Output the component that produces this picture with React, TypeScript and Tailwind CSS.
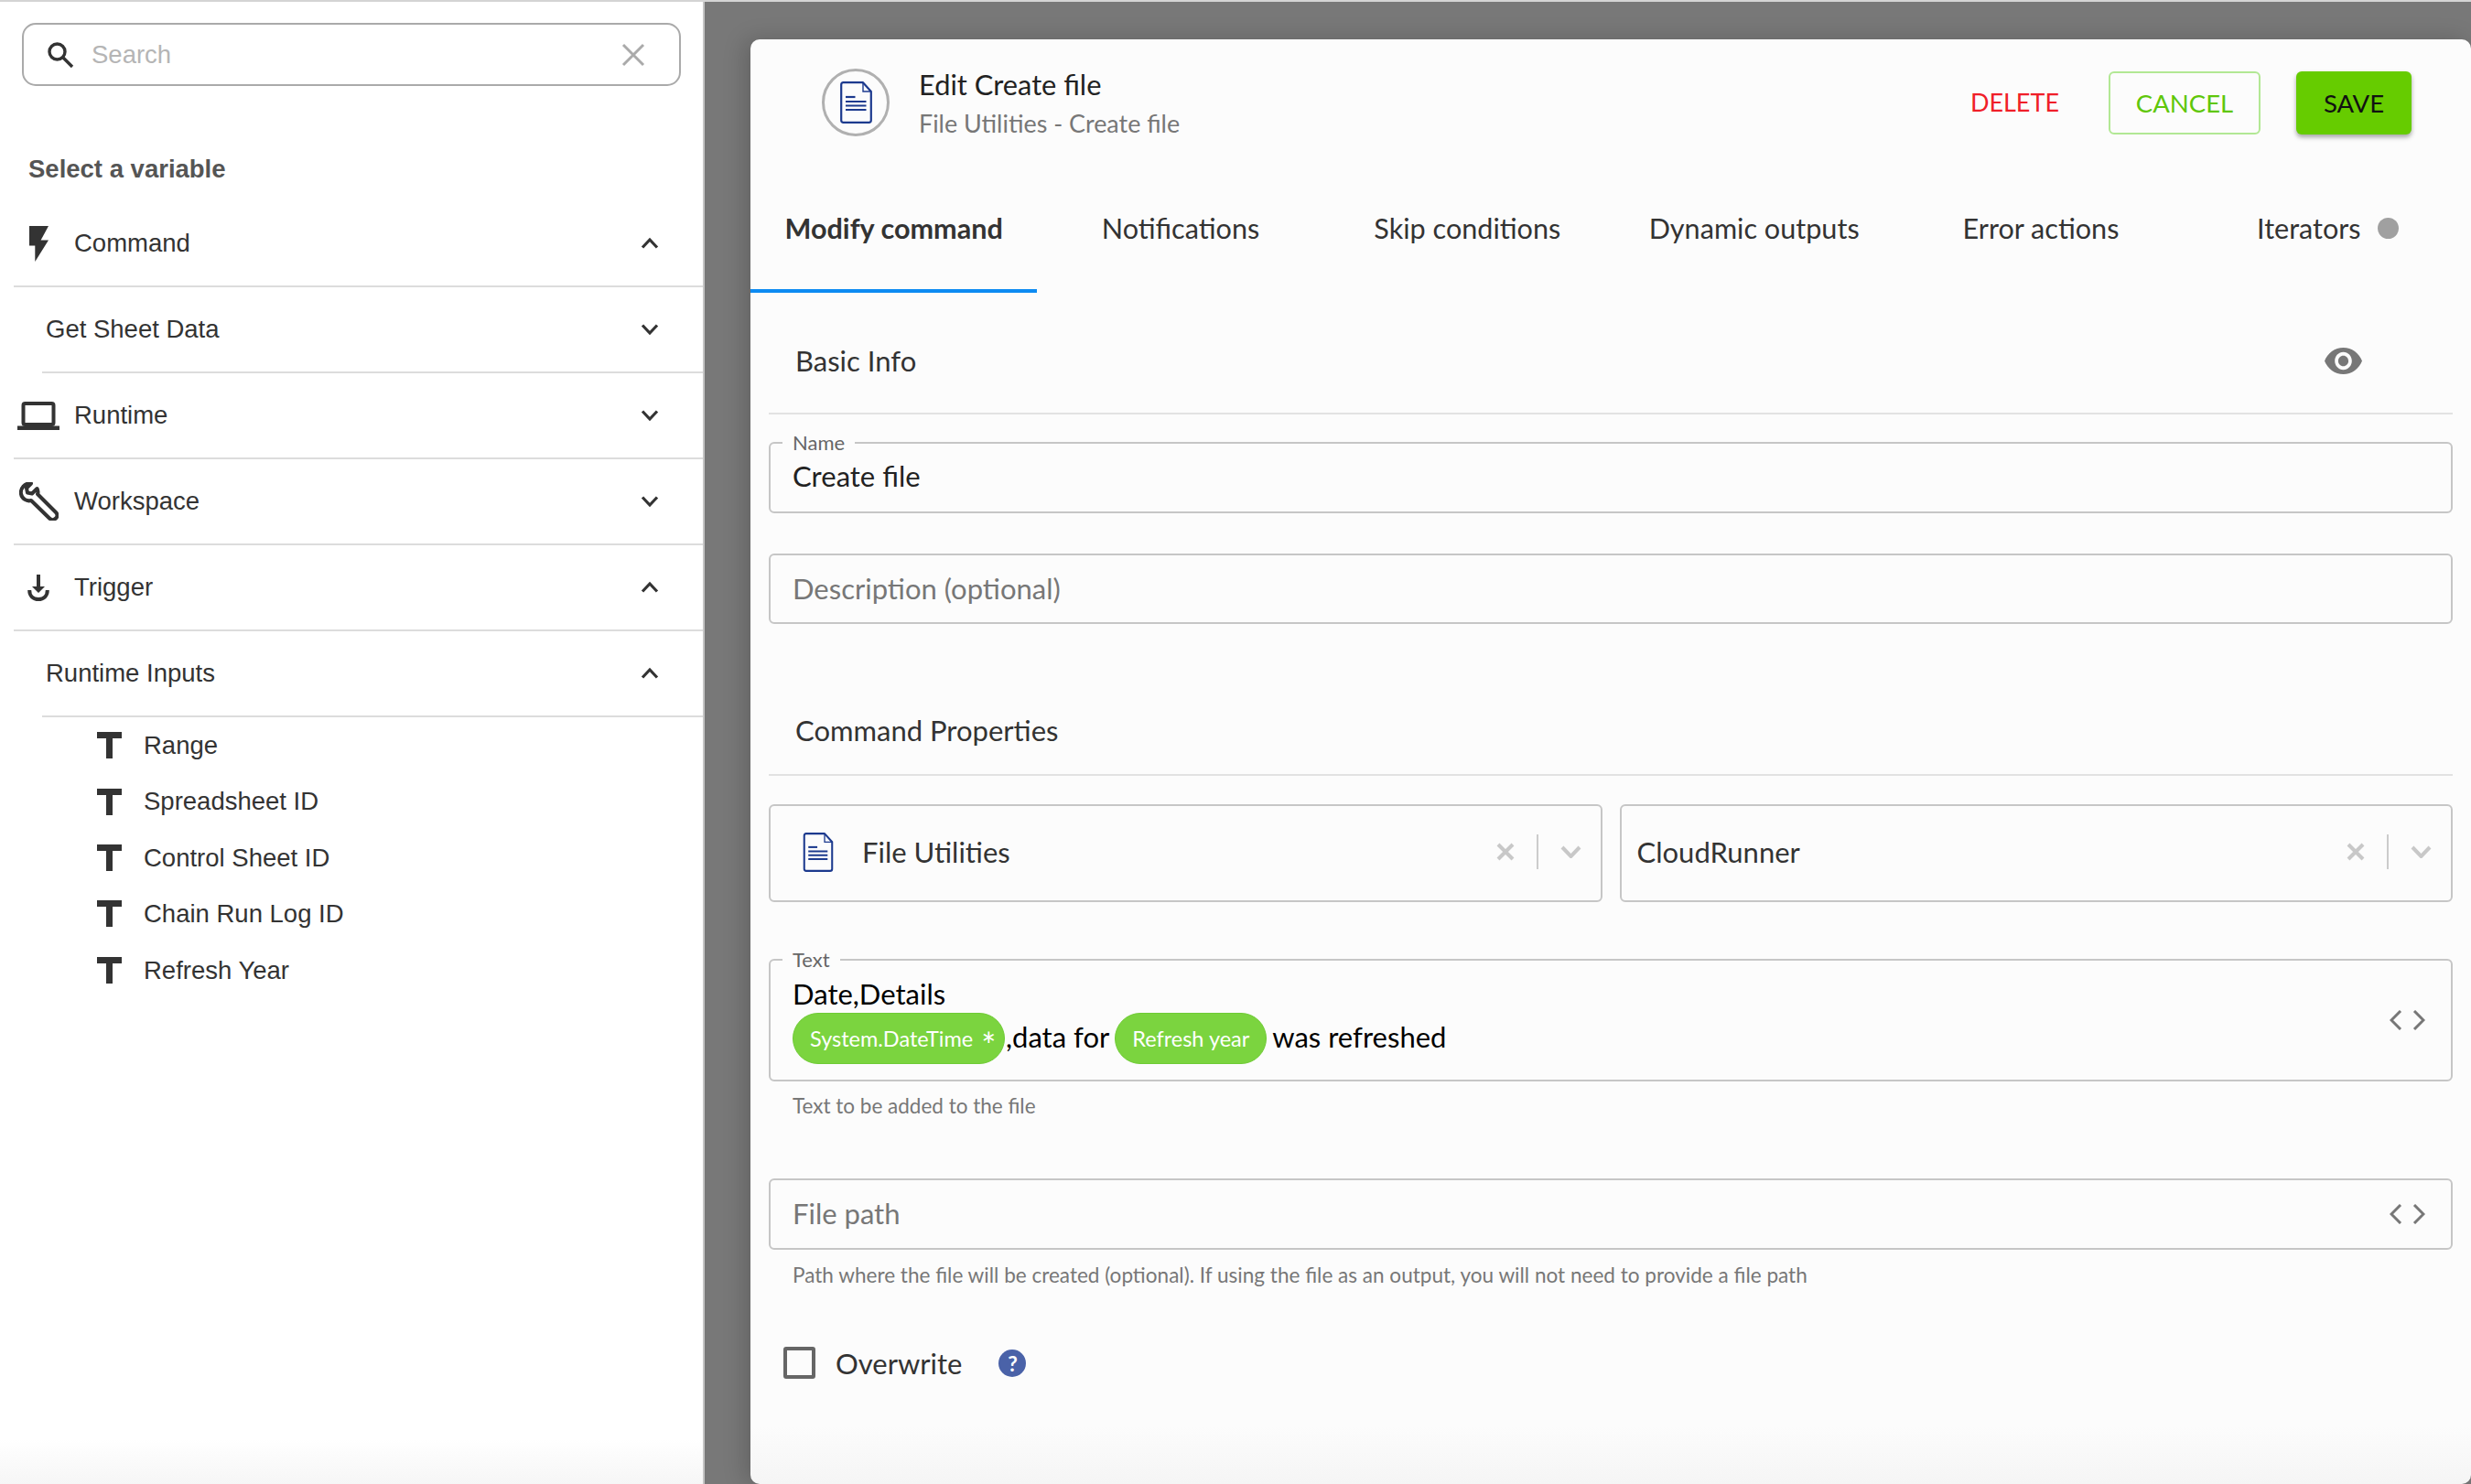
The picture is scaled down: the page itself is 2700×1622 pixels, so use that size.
import React from "react";

const lato = "font-['Lato',sans-serif]";

function Chevron({ up }: { up?: boolean }) {
  return (
    <svg width="20" height="14" viewBox="0 0 20 14" fill="none" stroke="#333" strokeWidth="3.2" className={up ? "" : "rotate-180"}>
      <path d="M2 11.5 L10 3 L18 11.5" />
    </svg>
  );
}

function Row({ label, icon, up, indent }: { label: string; icon?: React.ReactNode; up?: boolean; indent?: boolean }) {
  return (
    <div className={`h-[94px] flex items-center border-b-2 border-[#dcdcdc] ${indent ? "ml-[46px] pl-[4px]" : "ml-[15px]"}`}>
      {icon ? <div className="w-[68px] shrink-0 flex justify-center -ml-[2px] pr-[10px]">{icon}</div> : null}
      <span className="flex-1 text-[27.5px] text-[#333]">{label}</span>
      <div className="w-[20px] mr-[48px] flex"><Chevron up={up} /></div>
    </div>
  );
}

function TIcon() {
  return (
    <svg width="27" height="29" viewBox="0 0 27 29" fill="#333">
      <path d="M0 0H27V7H17V29H10V7H0Z" />
    </svg>
  );
}

function Sidebar() {
  const vars = ["Range", "Spreadsheet ID", "Control Sheet ID", "Chain Run Log ID", "Refresh Year"];
  return (
    <aside className="w-[770px] shrink-0 bg-[linear-gradient(to_bottom,#ffffff_97%,#f6f6f6)] border-r-2 border-[#c4c4c4] font-['Liberation_Sans',sans-serif] pt-[23px]">
      <div className="mx-[24px] w-[720px] h-[69px] rounded-[15px] border-2 border-[#aaa] flex items-center px-[25px]">
        <svg width="30" height="30" viewBox="0 0 30 30" fill="none" stroke="#333" strokeWidth="3.4">
          <circle cx="11.5" cy="11.5" r="8.5" />
          <path d="M18 18 L28 28" />
        </svg>
        <span className="ml-[19px] flex-1 text-[27.5px] text-[#b5b5b5]">Search</span>
        <svg width="26" height="26" viewBox="0 0 26 26" stroke="#aaa" strokeWidth="3" className="mr-[12px]">
          <path d="M2 2L24 24M24 2L2 24" />
        </svg>
      </div>
      <div className="mt-[75px] pl-[31px] text-[27.5px] font-bold text-[#555] leading-[32px]">Select a variable</div>
      <div className="mt-[19px]">
        <Row
          label="Command"
          up
          icon={
            <svg width="21" height="39" viewBox="7 2 10 20" fill="#333" preserveAspectRatio="none">
              <path d="M7 2v11h3v9l7-12h-4l4-8z" />
            </svg>
          }
        />
        <Row label="Get Sheet Data" indent />
        <Row
          label="Runtime"
          icon={
            <svg width="46" height="31" viewBox="0 0 46 31" fill="none">
              <rect x="6.5" y="2" width="33" height="23" rx="2" stroke="#333" strokeWidth="4" />
              <rect x="0" y="26.5" width="46" height="4.5" fill="#333" />
            </svg>
          }
        />
        <Row
          label="Workspace"
          icon={
            <svg width="43" height="42" viewBox="0 0 43 42" fill="none" stroke="#333" strokeWidth="4" strokeLinejoin="round">
              <path d="M13 1.5 L8 6.5 L9 11.5 L14 12.5 L19.5 7 C21 10 20.8 11.5 20 13 L40 33 C42 35 42 37.5 40 39.5 C38 41.5 35 41.5 33 39.5 L13 20 C8 21.5 3 18 2 13 C1 7 6 0.5 13 1.5Z" />
            </svg>
          }
        />
        <Row
          label="Trigger"
          up
          icon={
            <svg width="24" height="29" viewBox="0 0 24 29" fill="none">
              <path d="M10 0H14V13H19L12 20L5 13H10Z" fill="#333" />
              <path d="M2.2 17C2.2 23.5 6.5 27 12 27C17.5 27 21.8 23.5 21.8 17" stroke="#333" strokeWidth="4" />
            </svg>
          }
        />
        <Row label="Runtime Inputs" up indent />
      </div>
      <div>
        {vars.map((v) => (
          <div key={v} className="h-[61.4px] flex items-center pl-[106px]">
            <TIcon />
            <span className="ml-[24px] text-[27.5px] text-[#333]">{v}</span>
          </div>
        ))}
      </div>
    </aside>
  );
}

function DocIcon({ w, h }: { w: number; h: number }) {
  return (
    <svg width={w} height={h} viewBox="0 0 35 46" fill="none" stroke="#1c3a8e">
      <path d="M1.2 3.5 Q1.2 1.2 3.5 1.2H25L33.8 11V42.5 Q33.8 44.8 31.5 44.8H3.5 Q1.2 44.8 1.2 42.5Z" strokeWidth="2.2" strokeLinejoin="round" />
      <path d="M25 1.2V11H33.8" strokeWidth="1.4" />
      <path d="M6 17H16.5" strokeWidth="2.2" />
      <path d="M6 22H28.5M6 26.5H28.5M6 31H28.5" strokeWidth="2.2" />
    </svg>
  );
}

function Code() {
  return (
    <svg width="39" height="22" viewBox="0 0 39 22" fill="none" stroke="#777" strokeWidth="3">
      <path d="M12 1 L2 11 L12 21M27 1 L37 11 L27 21" />
    </svg>
  );
}

function Field({ label, children, className }: { label?: string; children: React.ReactNode; className: string }) {
  return (
    <div className={`relative rounded-[6px] border-2 border-[#c6c6c6] ${className}`}>
      {label ? (
        <span className="absolute left-[13px] -top-[14px] h-[26px] px-[11px] bg-[#fcfcfc] text-[22px] leading-[26px] text-[#666]">{label}</span>
      ) : null}
      {children}
    </div>
  );
}

function Select({ children }: { children: React.ReactNode }) {
  return (
    <div className="flex-1 h-[107px] rounded-[6px] border-2 border-[#c6c6c6] flex items-start">
      <div className="flex-1 flex items-center h-[101px]">{children}</div>
      <div className="flex items-center h-[101px] pr-[21px]">
        <svg width="20" height="20" viewBox="0 0 20 20" stroke="#c8c8c8" strokeWidth="4">
          <path d="M2 2L18 18M18 2L2 18" />
        </svg>
        <div className="w-[2px] h-[38px] bg-[#cccccc] mx-[24px]" />
        <svg width="23" height="14" viewBox="0 0 23 14" fill="none" stroke="#c8c8c8" strokeWidth="4">
          <path d="M2 2L11.5 12L21 2" />
        </svg>
      </div>
    </div>
  );
}

function Chip({ children, className }: { children: React.ReactNode; className: string }) {
  return (
    <span className={`inline-flex items-center h-[56px] rounded-[28px] bg-[#7bd43f] border border-[#6fcb35] text-white text-[23.5px] ${className}`}>{children}</span>
  );
}

function Panel() {
  const tabs = ["Notifications", "Skip conditions", "Dynamic outputs", "Error actions"];
  return (
    <div className={`flex-1 h-[1579px] mt-[41px] ml-[50px] bg-[linear-gradient(to_bottom,#fcfcfc_96%,#f5f5f5)] rounded-[10px] shadow-[-6px_0_24px_rgba(0,0,0,0.18)] ${lato} text-[#333]`}>
      <header className="h-[188px] flex items-start">
        <div className="mt-[32px] ml-[78px] w-[74px] h-[74px] rounded-full border-[3px] border-[#b0b0b0] flex items-center justify-center">
          <DocIcon w={35} h={46} />
        </div>
        <div className="ml-[33px] mt-[32px] -translate-x-[1px]">
          <div className="text-[30.8px] leading-[36px] text-[#222]">Edit Create file</div>
          <div className="text-[26.9px] leading-[34px] mt-[7px] text-[#777]">File Utilities - Create file</div>
        </div>
        <div className="ml-auto mt-[35px] mr-[65px] flex items-center">
          <span className="text-[27px] text-[#f01e28] mr-[54px]">DELETE</span>
          <div className="w-[166px] h-[69px] rounded-[6px] border-2 border-[#b2e894] text-[#5fc70a] text-[27.5px] flex items-center justify-center">CANCEL</div>
          <div className="ml-[39px] w-[126px] h-[69px] rounded-[6px] bg-[#66cc00] text-[#111] text-[27.5px] flex items-center justify-center shadow-[0_3px_5px_rgba(0,0,0,0.35)]">SAVE</div>
        </div>
      </header>
      <nav className="grid grid-cols-6 h-[89px] text-[30.6px] text-[#333]">
        <div className="border-b-4 border-[#0d8bf2] flex items-start justify-center pt-[1px] font-bold h-[89px] leading-[36px]">Modify command</div>
        {tabs.map((t) => (
          <div key={t} className="flex items-start justify-center pt-[1px] leading-[36px]">{t}</div>
        ))}
        <div className="flex items-start justify-center pt-[1px] leading-[36px]">
          Iterators
          <span className="ml-[18px] mt-[6px] w-[23px] h-[23px] rounded-full bg-[#a0a0a0]" />
        </div>
      </nav>
      <main className="px-[20px]">
        <div className="h-[132.5px] border-b-2 border-[#e2e2e2] flex items-center pl-[29px] pr-[99px] text-[31px] text-[#333] pt-[18px]">
          <span className="flex-1">Basic Info</span>
          <svg width="41" height="29" viewBox="1 4.5 22 15" fill="#777" preserveAspectRatio="none">
            <path d="M12 4.5C7 4.5 2.73 7.61 1 12c1.73 4.39 6 7.5 11 7.5s9.27-3.11 11-7.5c-1.73-4.39-6-7.5-11-7.5zM12 17c-2.76 0-5-2.24-5-5s2.24-5 5-5 5 2.24 5 5-2.24 5-5 5zm0-8c-1.66 0-3 1.34-3 3s1.34 3 3 3 3-1.34 3-3-1.34-3-3-3z" />
          </svg>
        </div>
        <Field label="Name" className="mt-[30px] h-[78px] flex items-center pl-[24px] pb-[3px] text-[31px] text-[#222]">Create file</Field>
        <Field className="mt-[44px] h-[77px] flex items-center pl-[24px] text-[31px] text-[#777]">Description (optional)</Field>
        <div className="mt-[70px] h-[96px] border-b-2 border-[#e2e2e2] flex items-center pl-[29px] text-[31px] text-[#333]">Command Properties</div>
        <div className="mt-[31px] flex gap-[19px]">
          <Select>
            <div className="ml-[35px] mr-[31px] flex"><DocIcon w={34} h={43} /></div>
            <span className="text-[31px] text-[#333]">File Utilities</span>
          </Select>
          <Select>
            <span className="ml-[17px] text-[31px] text-[#333]">CloudRunner</span>
          </Select>
        </div>
        <Field label="Text" className="mt-[62px] h-[134px] pl-[24px] pr-[28px] flex items-center text-[31px] text-black">
          <div className="flex-1 pt-[1px]">
            <div className="leading-[36px]">Date,Details</div>
            <div className="flex items-center mt-[3px] leading-[36px]">
              <Chip className="w-[232px] pl-[18px] pr-[9px]">
                <span>System.DateTime</span>
                <span className="ml-[9px] text-[38px] leading-[30px] translate-y-[7px]">*</span>
              </Chip>
              <span className="ml-[1px] -translate-y-[2px]">,data for</span>
              <Chip className="w-[166px] justify-center ml-[6px] text-[23.2px]">Refresh year</Chip>
              <span className="ml-[6px] -translate-y-[2px]">was refreshed</span>
            </div>
          </div>
          <Code />
        </Field>
        <div className="mt-[14px] pl-[26px] text-[22.5px] leading-[26px] text-[#777]">Text to be added to the file</div>
        <Field className="mt-[66px] h-[78px] flex items-center pl-[24px] pr-[28px] text-[31px] text-[#777]">
          <span className="flex-1">File path</span>
          <Code />
        </Field>
        <div className="mt-[15px] pl-[26px] text-[22.55px] leading-[26px] text-[#777]">
          Path where the file will be created (optional). If using the file as an output, you will not need to provide a file path
        </div>
        <div className="mt-[60px] pl-[16px] flex items-center">
          <span className="w-[35px] h-[35px] rounded-[3px] border-[4px] border-[#666]" />
          <span className="ml-[22px] text-[31px] text-[#333]">Overwrite</span>
          <span className="ml-[40px] w-[30px] h-[30px] rounded-full bg-[#4a62a8] text-white font-bold text-[23px] leading-[30px] text-center">?</span>
        </div>
      </main>
    </div>
  );
}

export default function App() {
  return (
    <div className="w-[2700px] h-[1622px] overflow-hidden bg-[#787878] border-t-2 border-[#d4d4d4] flex">
      <Sidebar />
      <Panel />
    </div>
  );
}
